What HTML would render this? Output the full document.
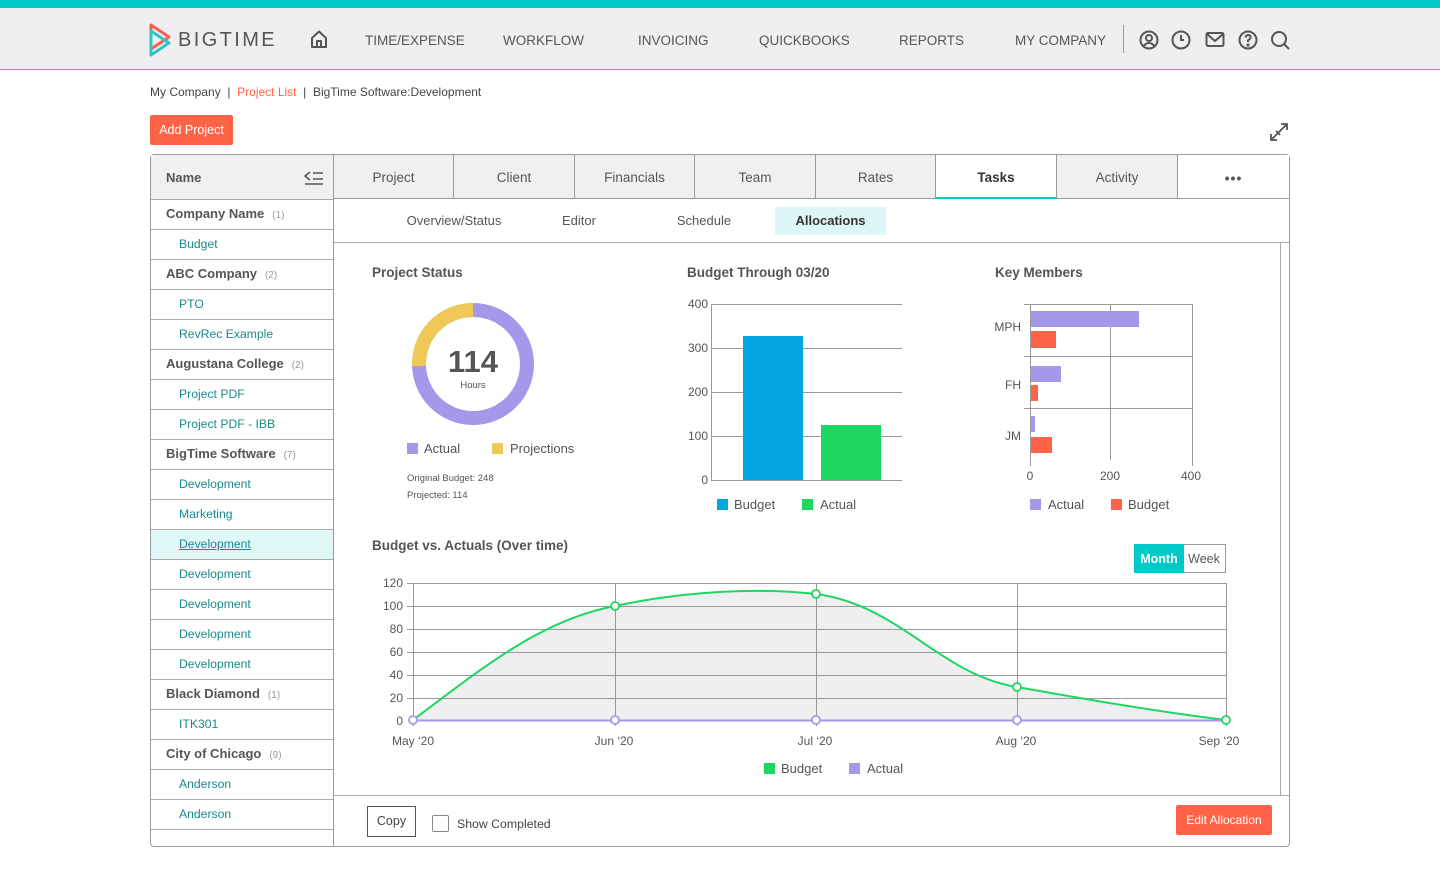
<!DOCTYPE html>
<html><head><meta charset="utf-8"><style>
*{box-sizing:border-box;margin:0;padding:0}
body{width:1440px;height:892px;background:#fff;font-family:"Liberation Sans",sans-serif;color:#555;position:relative;overflow:hidden}
.abs{position:absolute}
.top{left:0;top:0;width:1440px;height:8px;background:#00c9c8}
.nav{left:0;top:8px;width:1440px;height:62px;background:#efeff2;border-bottom:1px solid #3bb5bf}
.nav .m{position:absolute;top:25px;font-size:13.5px;color:#555}
.side{left:150px;top:154px;width:184px;height:693px;border:1px solid #9a9a9a;border-radius:4px 0 0 4px;border-right:1px solid #9a9a9a}
.row{position:absolute;left:0;width:182px;height:30px;border-top:1px solid #aaa;font-size:13px;line-height:28px}
.g{font-weight:bold;color:#555;padding-left:15px}
.g small{font-weight:normal;font-size:10px;color:#999;margin-left:8px}
.c{color:#1a8a8c;padding-left:28px;font-size:12.2px}
.main{left:333px;top:154px;width:957px;height:693px;border:1px solid #9a9a9a;border-left:1px solid #9a9a9a;border-radius:0 4px 4px 0}
.tab{position:absolute;top:0;height:44px;background:#f0f0f2;border-right:1px solid #9a9a9a;border-bottom:1px solid #9a9a9a;font-size:13.5px;line-height:46px;text-align:center;color:#555}
.sub{position:absolute;top:52px;height:28px;line-height:28px;font-size:13px;color:#555;text-align:center}
.btn{background:#ff6347;color:#fff;font-size:12.5px;text-align:center;border-radius:2px}
svg text{font-family:"Liberation Sans",sans-serif}
</style></head><body>
<div class="abs top"></div>
<div class="abs nav">
 <svg class="abs" style="left:148px;top:14px" width="26" height="36" viewBox="0 0 26 36"><path d="M3 3 L21 15 L3 27 Z" fill="none" stroke="#ff5c4d" stroke-width="3" stroke-linejoin="round"/><path d="M3 9 L21 21 L3 33 Z" fill="none" stroke="#2fc4c8" stroke-width="3" stroke-linejoin="round"/></svg>
 <div class="abs" style="left:178px;top:21px;font-size:20px;letter-spacing:2.4px;color:#555">BIGTIME</div>
 <svg class="abs" style="left:309px;top:21px" width="20" height="20" viewBox="0 0 20 20"><path d="M3 9 L10 2.5 L17 9 V18 H3 Z M8 18 V12 H12 V18" fill="none" stroke="#555" stroke-width="2" stroke-linejoin="round"/></svg>
 <span class="m" style="left:365px">TIME/EXPENSE</span>
 <span class="m" style="left:503px">WORKFLOW</span>
 <span class="m" style="left:638px">INVOICING</span>
 <span class="m" style="left:759px">QUICKBOOKS</span>
 <span class="m" style="left:899px">REPORTS</span>
 <span class="m" style="left:1015px">MY COMPANY</span>
 <div class="abs" style="left:1123px;top:17px;width:1px;height:28px;background:#999"></div>
 <svg class="abs" style="left:1138px;top:21px" width="155" height="22" viewBox="0 0 155 22" fill="none" stroke="#555" stroke-width="2">
  <circle cx="11" cy="11" r="8.5"/><circle cx="11" cy="9" r="3"/><path d="M5.5 17 Q11 11 16.5 17"/>
  <circle cx="43" cy="11" r="8.5"/><path d="M43 6 V11 H46"/>
  <rect x="68.5" y="4" width="17" height="13" rx="1.5"/><path d="M69 5 L77 12 L85 5"/>
  <circle cx="110" cy="11" r="8.5"/><path d="M107.5 8.5 Q108 6 110.5 6 Q113 6.5 112.5 9 Q111.5 10.5 110 11.5 V13" /><circle cx="110" cy="16" r=".6"/>
  <circle cx="141" cy="10" r="7"/><path d="M146 15 L151 20"/>
 </svg>
</div>
<div class="abs" style="left:150px;top:85px;font-size:12px;color:#444">My Company &nbsp;|&nbsp; <span style="color:#ff6347">Project List</span> &nbsp;|&nbsp; BigTime Software:Development</div>
<div class="abs btn" style="left:150px;top:115px;width:83px;height:30px;line-height:30px">Add Project</div>
<svg class="abs" style="left:1268px;top:121px" width="22" height="22" viewBox="0 0 22 22" fill="none" stroke="#555" stroke-width="1.8"><path d="M3 19 L19 3 M13 3 H19 V9 M3 13 V19 H9 M8 10 L12 14"/></svg>

<div class="abs side">
 <div class="row" style="top:0;height:44px;border-top:none;background:#f0f0f2;line-height:46px;padding-left:15px;font-weight:bold">Name
  <svg class="abs" style="left:153px;top:15px" width="20" height="16" viewBox="0 0 20 16" fill="none" stroke="#555" stroke-width="1.6"><path d="M6 2 L1 6 L6 10 M9 3 H19 M9 9 H19 M1 14 H19"/></svg></div>
 <div class="row g" style="top:44px">Company Name<small>(1)</small></div>
 <div class="row c" style="top:74px">Budget</div>
 <div class="row g" style="top:104px">ABC Company<small>(2)</small></div>
 <div class="row c" style="top:134px">PTO</div>
 <div class="row c" style="top:164px">RevRec Example</div>
 <div class="row g" style="top:194px">Augustana College<small>(2)</small></div>
 <div class="row c" style="top:224px">Project PDF</div>
 <div class="row c" style="top:254px">Project PDF - IBB</div>
 <div class="row g" style="top:284px">BigTime Software<small>(7)</small></div>
 <div class="row c" style="top:314px">Development</div>
 <div class="row c" style="top:344px">Marketing</div>
 <div class="row c" style="top:374px;background:#e0f7f8;text-decoration:underline">Development</div>
 <div class="row c" style="top:404px">Development</div>
 <div class="row c" style="top:434px">Development</div>
 <div class="row c" style="top:464px">Development</div>
 <div class="row c" style="top:494px">Development</div>
 <div class="row g" style="top:524px">Black Diamond<small>(1)</small></div>
 <div class="row c" style="top:554px">ITK301</div>
 <div class="row g" style="top:584px">City of Chicago<small>(9)</small></div>
 <div class="row c" style="top:614px">Anderson</div>
 <div class="row c" style="top:644px">Anderson</div>
 <div class="row" style="top:674px;height:18px"></div>
</div>

<div class="abs main">
 <div class="tab" style="left:0;width:120px">Project</div>
 <div class="tab" style="left:120px;width:121px">Client</div>
 <div class="tab" style="left:241px;width:120px">Financials</div>
 <div class="tab" style="left:361px;width:121px">Team</div>
 <div class="tab" style="left:482px;width:120px">Rates</div>
 <div class="tab" style="left:602px;width:121px;background:#fff;font-weight:bold;color:#333;border-bottom:2px solid #00c9c8">Tasks</div>
 <div class="tab" style="left:723px;width:121px">Activity</div>
 <div class="tab" style="left:844px;width:111px;background:#fff;border-right:none;font-weight:bold;font-size:14px;letter-spacing:1px;line-height:46px">•••</div>
 <div class="sub" style="left:60px;width:120px">Overview/Status</div>
 <div class="sub" style="left:210px;width:70px">Editor</div>
 <div class="sub" style="left:330px;width:80px">Schedule</div>
 <div class="sub" style="left:441px;width:111px;background:#dff6f8;font-weight:bold;color:#333">Allocations</div>
 <div class="abs" style="left:0;top:87px;width:955px;height:1px;background:#aaa"></div>
 <div class="abs" style="left:946px;top:88px;width:1px;height:552px;background:#aaa"></div>
 <div class="abs" style="left:0;top:640px;width:955px;height:1px;background:#aaa"></div>
 <div class="abs" style="left:33px;top:651px;width:49px;height:31px;border:1px solid #555;font-size:12.5px;line-height:29px;text-align:center;color:#444">Copy</div>
 <div class="abs" style="left:98px;top:660px;width:17px;height:17px;border:1px solid #888;border-radius:2px"></div>
 <div class="abs" style="left:123px;top:662px;font-size:12.3px;color:#444">Show Completed</div>
 <div class="abs btn" style="left:842px;top:650px;width:96px;height:30px;line-height:30px;font-size:12px">Edit Allocation</div>
</div>

<svg class="abs" style="left:0;top:0" width="1440" height="892" viewBox="0 0 1440 892" font-size="12.5">
 <g font-weight="bold" font-size="13.5" fill="#555">
  <text x="372" y="277">Project Status</text>
  <text x="687" y="277">Budget Through 03/20</text>
  <text x="995" y="277">Key Members</text>
  <text x="372" y="550">Budget vs. Actuals (Over time)</text>
 </g>
 <circle cx="473" cy="364" r="54" fill="none" stroke="#a498ea" stroke-width="14"/>
 <path d="M419 366 A54 54 0 0 1 473 310" fill="none" stroke="#f0c856" stroke-width="14"/>
 <text x="473" y="372" text-anchor="middle" font-size="31" font-weight="bold" fill="#555">114</text>
 <text x="473" y="388" text-anchor="middle" font-size="9.5" fill="#555">Hours</text>
 <rect x="407" y="443" width="11" height="11" fill="#a498ea"/><text x="424" y="453" font-size="13" fill="#555">Actual</text>
 <rect x="492" y="443" width="11" height="11" fill="#f0c856"/><text x="510" y="453" font-size="13" fill="#555">Projections</text>
 <text x="407" y="481" font-size="9.5" fill="#555">Original Budget: 248</text>
 <text x="407" y="498" font-size="9.5" fill="#555">Projected: 114</text>
 <g stroke="#999" stroke-width="1"><path d="M711 304.5H902M711 348.5H902M711 392.5H902M711 436.5H902M711 480.5H902M711.5 304V480"/></g>
 <g fill="#555" text-anchor="end" font-size="12"><text x="708" y="308">400</text><text x="708" y="352">300</text><text x="708" y="396">200</text><text x="708" y="440">100</text><text x="708" y="484">0</text></g>
 <rect x="743" y="336" width="60" height="144" fill="#03a6e3"/>
 <rect x="821" y="425" width="60" height="55" fill="#1ed760"/>
 <rect x="717" y="499" width="11" height="11" fill="#03a6e3"/><text x="734" y="509" font-size="13" fill="#555">Budget</text>
 <rect x="802" y="499" width="11" height="11" fill="#1ed760"/><text x="820" y="509" font-size="13" fill="#555">Actual</text>
 <g stroke="#999" fill="none"><path d="M1024 304.5H1192.5V460M1024 356.5H1192M1024 408.5H1192M1030.5 304V466M1110.5 304V460M1192.5 460V466"/></g>
 <rect x="1031" y="311" width="108" height="16" fill="#a498ea"/><rect x="1031" y="331" width="25" height="17" fill="#ff6347"/>
 <rect x="1031" y="366" width="30" height="16" fill="#a498ea"/><rect x="1031" y="385" width="7" height="16" fill="#ff6347"/>
 <rect x="1031" y="416" width="4" height="16" fill="#a498ea"/><rect x="1031" y="437" width="21" height="16" fill="#ff6347"/>
 <g fill="#555" font-size="12" text-anchor="end"><text x="1021" y="331">MPH</text><text x="1021" y="389">FH</text><text x="1021" y="440">JM</text></g>
 <g fill="#555" font-size="12" text-anchor="middle"><text x="1030" y="480">0</text><text x="1110" y="480">200</text><text x="1191" y="480">400</text></g>
 <rect x="1030" y="499" width="11" height="11" fill="#a498ea"/><text x="1048" y="509" font-size="13" fill="#555">Actual</text>
 <rect x="1111" y="499" width="11" height="11" fill="#ff6347"/><text x="1128" y="509" font-size="13" fill="#555">Budget</text>
 <rect x="1134.5" y="544.5" width="91" height="28" fill="#fff" stroke="#999"/>
 <rect x="1134" y="544" width="50" height="29" fill="#00c9c8"/>
 <text x="1159" y="563" text-anchor="middle" font-size="12.5" font-weight="bold" fill="#fff">Month</text>
 <text x="1204" y="563" text-anchor="middle" font-size="12.5" fill="#555">Week</text>
 <path d="M413 720 C480 670 540 620 615 606 C690 590 760 588 816 594 C900 605 940 675 1017 687 C1090 700 1160 712 1226 720 L1226 720 L413 720Z" fill="#efeff2"/>
 <g stroke="#999" fill="none"><path d="M407 583.5H1226M407 606.5H1226M407 629.5H1226M407 652.5H1226M407 675.5H1226M407 698.5H1226M413.5 583V726M615.5 583V726M816.5 583V726M1017.5 583V726M1226.5 583V726"/></g>
 <g fill="#555" font-size="12" text-anchor="end"><text x="403" y="587">120</text><text x="403" y="610">100</text><text x="403" y="633">80</text><text x="403" y="656">60</text><text x="403" y="679">40</text><text x="403" y="702">20</text><text x="403" y="725">0</text></g>
 <path d="M413 720 C480 670 540 620 615 606 C690 590 760 588 816 594 C900 605 940 675 1017 687 C1090 700 1160 712 1226 720" fill="none" stroke="#1ed760" stroke-width="2"/>
 <path d="M413 720.5H1226" stroke="#a498ea" stroke-width="2"/>
 <g fill="#fff" stroke="#1ed760" stroke-width="1.8"><circle cx="615" cy="606" r="4"/><circle cx="816" cy="594" r="4"/><circle cx="1017" cy="687" r="4"/><circle cx="1226" cy="720" r="4"/></g>
 <g fill="#fff" stroke="#a498ea" stroke-width="1.8"><circle cx="413" cy="720" r="4"/><circle cx="615" cy="720" r="4"/><circle cx="816" cy="720" r="4"/><circle cx="1017" cy="720" r="4"/></g>
 <g fill="#555" font-size="12" text-anchor="middle"><text x="413" y="745">May ‘20</text><text x="614" y="745">Jun ‘20</text><text x="815" y="745">Jul ‘20</text><text x="1016" y="745">Aug ‘20</text><text x="1219" y="745">Sep ‘20</text></g>
 <rect x="764" y="763" width="11" height="11" fill="#1ed760"/><text x="781" y="773" font-size="13" fill="#555">Budget</text>
 <rect x="849" y="763" width="11" height="11" fill="#a498ea"/><text x="867" y="773" font-size="13" fill="#555">Actual</text>
</svg>
</body></html>
